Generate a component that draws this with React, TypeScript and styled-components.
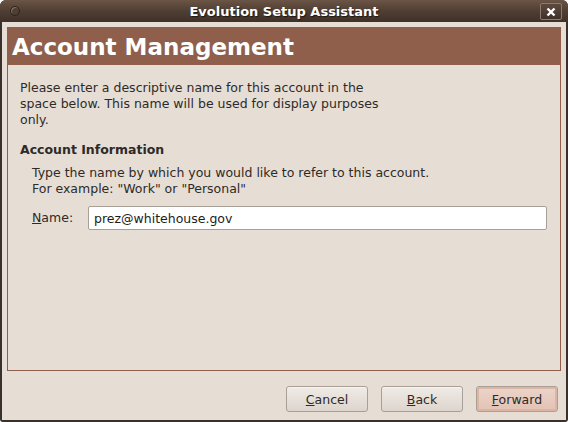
import React from "react"
import styled, { createGlobalStyle } from "styled-components"

const GlobalStyle = createGlobalStyle`
  html, body {
    margin: 0;
    padding: 0;
    background: #ffffff;
  }
  body {
    font-family: "DejaVu Sans", "Liberation Sans", sans-serif;
  }
`

const Window = styled.div`
  width: 568px;
  height: 422px;
  box-sizing: border-box;
  display: flex;
  flex-direction: column;
  border-radius: 6px 6px 3px 3px;
  overflow: hidden;
  background: #3a302b;
  padding: 0 2px 2px 2px;
`

const TitleBar = styled.div`
  height: 22px;
  flex-shrink: 0;
  margin: 0 -2px;
  position: relative;
  display: flex;
  align-items: center;
  justify-content: center;
  background: linear-gradient(#6b5546, #4f3e33 50%, #3f3129);
  color: #ffffff;
  font-weight: bold;
  font-size: 13px;
  text-shadow: 1px 1px 1px #1f1712;
`

const MenuDot = styled.span`
  position: absolute;
  left: 10px;
  top: 6px;
  width: 8px;
  height: 8px;
  border-radius: 50%;
  border: 1px solid #2d231d;
  box-shadow: inset 1px 1px 0 #8a7565;
  background: #4e3e34;
`

const CloseButton = styled.span`
  position: absolute;
  right: 6px;
  top: 3px;
  width: 20px;
  height: 15px;
  border: 1px solid #8b7a6d;
  border-radius: 2px;
  background: linear-gradient(#5c4a3e, #3f3129);
  display: flex;
  align-items: center;
  justify-content: center;
`

const Body = styled.div`
  flex: 1;
  display: flex;
  flex-direction: column;
  background: #e6ded5;
  padding: 5px 5px 0 5px;
  color: #2e2a27;
  font-size: 12.5px;
`

const Frame = styled.div`
  flex: 1;
  border: 1px solid #8f5f4b;
  display: flex;
  flex-direction: column;
`

const Banner = styled.div`
  background: #8f5f4b;
  color: #ffffff;
  font-weight: bold;
  font-size: 23px;
  height: 37px;
  display: flex;
  align-items: center;
  padding-left: 4px;
`

const Content = styled.div`
  padding: 15px 12px;
  line-height: 16px;
`

const Paragraph = styled.p`
  margin: 0;
  width: 370px;
`

const Heading = styled.div`
  font-weight: bold;
  margin-top: 14px;
`

const Indented = styled.div`
  padding-left: 12px;
  margin-top: 7px;
`

const FieldRow = styled.div`
  display: flex;
  align-items: center;
  margin-top: 9px;
  gap: 13px;
`

const Label = styled.label`
  width: 43px;
  u {
    text-decoration: underline;
  }
`

const TextInput = styled.input`
  flex: 1;
  height: 24px;
  box-sizing: border-box;
  border: 1px solid #a89f96;
  border-radius: 2px;
  background: #ffffff;
  font-family: inherit;
  font-size: 12.5px;
  color: #1e1b19;
  padding: 0 5px;
  margin-right: 1px;
  outline: none;
`

const ButtonBar = styled.div`
  height: 49px;
  flex-shrink: 0;
  box-sizing: border-box;
  display: flex;
  align-items: flex-start;
  justify-content: flex-end;
  gap: 13px;
  padding-right: 3px;
  padding-top: 15px;
`

const Button = styled.button<{ $focused?: boolean }>`
  width: 82px;
  height: 26px;
  box-sizing: border-box;
  border: 1px solid #a8a098;
  border-radius: 3px;
  background: ${(p) =>
    p.$focused
      ? "linear-gradient(#ecd5ca, #e2c2b3)"
      : "linear-gradient(#f0ebe6, #e6dfd8 55%, #ddd5cd)"};
  box-shadow: ${(p) => (p.$focused ? "inset 0 0 0 2px #dcb6a5" : "inset 0 1px 0 #f7f4f1")};
  font-family: inherit;
  font-size: 12.5px;
  color: #2e2a27;
  padding: 0;
  u {
    text-decoration: underline;
  }
`

export default function App() {
  return (
    <>
      <GlobalStyle />
      <Window>
        <TitleBar>
          <MenuDot />
          Evolution Setup Assistant
          <CloseButton>
            <svg width="10" height="10" viewBox="0 0 10 10">
              <path d="M1.5 1.5 L8.5 8.5 M8.5 1.5 L1.5 8.5" stroke="#ffffff" strokeWidth="2.4" />
            </svg>
          </CloseButton>
        </TitleBar>
        <Body>
          <Frame>
            <Banner>Account Management</Banner>
            <Content>
              <Paragraph>
                Please enter a descriptive name for this account in the space below. This name will
                be used for display purposes only.
              </Paragraph>
              <Heading>Account Information</Heading>
              <Indented>
                Type the name by which you would like to refer to this account.
                <br />
                For example: "Work" or "Personal"
                <FieldRow>
                  <Label>
                    <u>N</u>ame:
                  </Label>
                  <TextInput defaultValue="prez@whitehouse.gov" />
                </FieldRow>
              </Indented>
            </Content>
          </Frame>
          <ButtonBar>
            <Button>
              <u>C</u>ancel
            </Button>
            <Button>
              <u>B</u>ack
            </Button>
            <Button $focused>
              <u>F</u>orward
            </Button>
          </ButtonBar>
        </Body>
      </Window>
    </>
  )
}
